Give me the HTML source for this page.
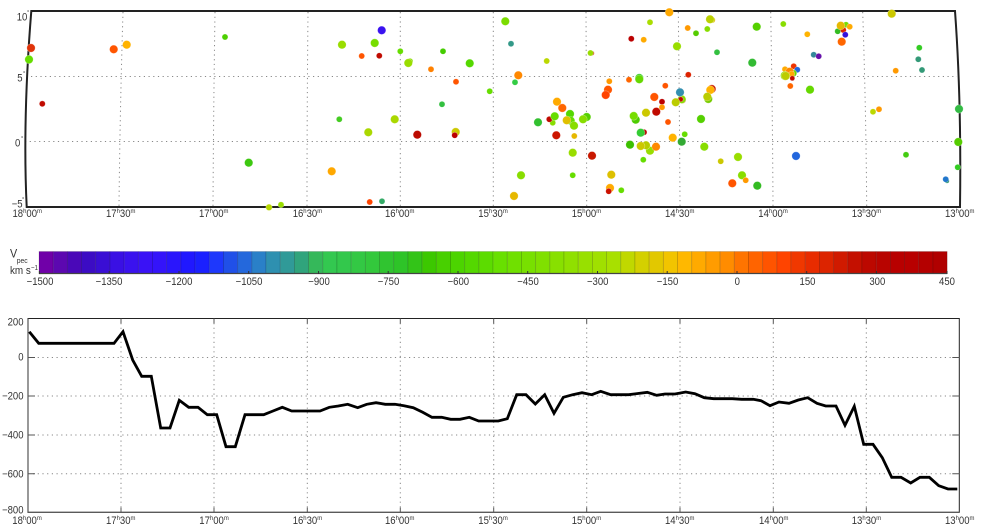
<!DOCTYPE html>
<html><head><meta charset="utf-8"><style>
html,body{margin:0;padding:0;background:#fff;width:981px;height:528px;overflow:hidden}
svg{display:block}
text{font-family:"Liberation Sans",sans-serif;font-size:10.6px;fill:#333;transform:scaleX(.9);transform-box:fill-box;transform-origin:0 50%}
.m text{transform-origin:50% 50%}
.e text{transform-origin:100% 50%}
.s{font-size:6.6px}
.g{stroke:#888;stroke-width:1;stroke-dasharray:1.2 3.5;fill:none}
.t{stroke:#555;stroke-width:1;fill:none}
.d circle{stroke:#fff;stroke-opacity:.4;stroke-width:.6}
.d circle[r="2.700"]{r:3px}
.d circle[r="3.800"]{r:4.2px}
</style></head><body>
<svg width="981" height="528" viewBox="0 0 981 528" xmlns="http://www.w3.org/2000/svg">
<!-- map grid -->
<g class="g">
<path d="M31 76.500H957M25 141.500H960"/>
<path d="M123 12Q120 110 119 206M215 12Q213.500 110 213 206M308 12Q307 110 307 206M400.300 12V206M493.300 12V206M586 12Q586.500 110 586.700 206M678.300 12Q679.500 110 680 206M770.700 12Q772.500 110 773 206M862.700 12Q866 110 866.700 206"/>
</g>
<path d="M31.300 11L955 11Q961.500 100 960 207L26.700 207Q22.500 120 31.300 11Z" fill="none" stroke="#222" stroke-width="2"/>
<!-- map points -->
<g class="d">
<circle cx="31" cy="48" r="3.800" fill="#e0340a"/><circle cx="29" cy="59.500" r="3.800" fill="#66dd00"/><circle cx="42.300" cy="103.800" r="2.700" fill="#c00a00"/><circle cx="113.700" cy="49.300" r="3.800" fill="#ff5500"/><circle cx="126.700" cy="44.700" r="3.800" fill="#ffb300"/><circle cx="225" cy="37" r="2.700" fill="#4dd000"/><circle cx="248.700" cy="162.700" r="3.800" fill="#3dc810"/><circle cx="331.700" cy="171.300" r="3.800" fill="#ffa800"/><circle cx="269" cy="207.300" r="3.200" fill="#b8d800"/><circle cx="281" cy="204.700" r="2.700" fill="#99dd00"/>
<circle cx="505.300" cy="21.300" r="3.800" fill="#7bdc00"/><circle cx="381.700" cy="30.300" r="3.800" fill="#3a12f0"/><circle cx="342" cy="44.700" r="3.800" fill="#99dd00"/><circle cx="374.700" cy="43" r="3.800" fill="#77dd00"/><circle cx="361.700" cy="56" r="2.700" fill="#ff5500"/><circle cx="379.300" cy="55.700" r="2.700" fill="#c00a00"/><circle cx="400.300" cy="51.300" r="2.700" fill="#66dd00"/><circle cx="443" cy="51.300" r="2.700" fill="#44cc00"/><circle cx="410" cy="61.300" r="3" fill="#88dd00"/><circle cx="408.300" cy="63" r="3.800" fill="#99dd00"/><circle cx="469.700" cy="63.300" r="3.800" fill="#55d800"/><circle cx="431" cy="69.300" r="2.700" fill="#ff8000"/><circle cx="456" cy="81.700" r="2.700" fill="#ff5500"/><circle cx="511" cy="43.700" r="2.700" fill="#339988"/><circle cx="546.700" cy="61" r="2.700" fill="#bbd800"/><circle cx="592" cy="53.300" r="2.300" fill="#dd2200"/><circle cx="590.500" cy="53" r="2.700" fill="#99dd00"/><circle cx="631.300" cy="38.700" r="2.700" fill="#bb0000"/><circle cx="643.700" cy="39.700" r="2.700" fill="#ffaa00"/><circle cx="650" cy="22.300" r="2.700" fill="#aadd00"/><circle cx="518.300" cy="75.300" r="3.800" fill="#ff8800"/><circle cx="515" cy="82.300" r="2.700" fill="#33cc44"/><circle cx="489.700" cy="91.300" r="2.700" fill="#66dd00"/><circle cx="442" cy="104.300" r="2.700" fill="#33c040"/><circle cx="339.300" cy="119.300" r="2.700" fill="#44cc22"/><circle cx="394.700" cy="119.300" r="3.800" fill="#aad800"/><circle cx="368.300" cy="132.300" r="3.800" fill="#aad800"/><circle cx="417.300" cy="134.700" r="3.800" fill="#bb0a00"/><circle cx="455.700" cy="132" r="3.800" fill="#ccc800"/><circle cx="454.700" cy="135.300" r="2.700" fill="#bb0000"/><circle cx="369.700" cy="202" r="2.700" fill="#ff4400"/><circle cx="382" cy="201.300" r="2.700" fill="#33aa66"/><circle cx="521" cy="175.300" r="3.800" fill="#88dd00"/><circle cx="514" cy="196" r="3.800" fill="#e6b800"/><circle cx="572.700" cy="175.300" r="2.700" fill="#66dd00"/><circle cx="572.700" cy="152.700" r="3.800" fill="#99dd00"/><circle cx="592" cy="155.700" r="3.800" fill="#c81800"/><circle cx="611.300" cy="174.700" r="3.800" fill="#ddc000"/><circle cx="610" cy="188" r="3.800" fill="#ffaa00"/><circle cx="608.700" cy="191.300" r="2.700" fill="#cc1100"/><circle cx="621.300" cy="190.300" r="2.700" fill="#66dd00"/><circle cx="574.300" cy="136" r="2.700" fill="#e6b800"/><circle cx="556.300" cy="135.300" r="3.800" fill="#cc1500"/><circle cx="538" cy="122.300" r="3.800" fill="#33c030"/><circle cx="552.700" cy="122.700" r="2.700" fill="#88dd00"/><circle cx="549.300" cy="119.300" r="2.700" fill="#c00a00"/><circle cx="554.700" cy="116.300" r="3.800" fill="#66dd00"/><circle cx="557" cy="101.700" r="3.800" fill="#ffaa00"/><circle cx="562.300" cy="108" r="3.800" fill="#ff6600"/><circle cx="570" cy="114" r="3.800" fill="#55d800"/><circle cx="570.700" cy="120.700" r="3.800" fill="#66dd00"/><circle cx="566.700" cy="120.300" r="3.800" fill="#e0c000"/><circle cx="574" cy="125.700" r="3.800" fill="#88dd00"/><circle cx="586.700" cy="117" r="3.800" fill="#55d000"/><circle cx="583" cy="119.300" r="3.800" fill="#88dd00"/><circle cx="609.300" cy="81.300" r="2.700" fill="#ff9900"/><circle cx="629" cy="79.700" r="2.700" fill="#ff6600"/><circle cx="639.300" cy="78" r="3.800" fill="#33cc22"/><circle cx="639.300" cy="79.300" r="3.800" fill="#66d800"/><circle cx="608" cy="89.700" r="3.800" fill="#ff5500"/><circle cx="605.700" cy="95" r="3.800" fill="#ff4400"/><circle cx="654.300" cy="97" r="3.800" fill="#ff5500"/><circle cx="656.300" cy="111.700" r="3.800" fill="#c00a00"/><circle cx="646" cy="112.700" r="3.800" fill="#ccc800"/><circle cx="635.700" cy="119.700" r="3.800" fill="#4dcc00"/><circle cx="633.700" cy="116" r="3.800" fill="#77dd00"/><circle cx="644" cy="132.300" r="2.700" fill="#bb0000"/><circle cx="640.700" cy="132.700" r="3.800" fill="#33cc33"/><circle cx="630" cy="144.700" r="3.800" fill="#3cc000"/><circle cx="650" cy="150.700" r="3.800" fill="#99dd00"/><circle cx="646" cy="145.300" r="3.800" fill="#b8cc00"/><circle cx="640.700" cy="146" r="3.800" fill="#ccc800"/><circle cx="656" cy="146.700" r="3.800" fill="#ff8800"/><circle cx="643.300" cy="159.700" r="2.700" fill="#66dd00"/>
<circle cx="669.300" cy="12.300" r="3.800" fill="#ffa800"/><circle cx="712.300" cy="20" r="2.700" fill="#ddc000"/><circle cx="710" cy="19.300" r="3.800" fill="#bbd000"/><circle cx="687.700" cy="28" r="2.700" fill="#ff9900"/><circle cx="707.300" cy="29" r="2.700" fill="#88dd00"/><circle cx="696" cy="33.300" r="2.700" fill="#55cc00"/><circle cx="756.700" cy="26.700" r="3.800" fill="#55d000"/><circle cx="677" cy="46.300" r="3.800" fill="#99dd00"/><circle cx="717" cy="52.300" r="2.700" fill="#33c040"/><circle cx="752.300" cy="62.700" r="3.800" fill="#33bb33"/><circle cx="783.300" cy="24" r="2.700" fill="#88dd00"/><circle cx="807.300" cy="34.300" r="2.700" fill="#ffb300"/><circle cx="846" cy="24.700" r="2.700" fill="#77dd00"/><circle cx="849.700" cy="26.700" r="2.700" fill="#ffaa00"/><circle cx="837.700" cy="31.300" r="2.700" fill="#33bb22"/><circle cx="843.300" cy="30" r="2.700" fill="#dd2200"/><circle cx="840.700" cy="25.700" r="3.800" fill="#e6b800"/><circle cx="845.300" cy="34.700" r="2.700" fill="#3311dd"/><circle cx="841.700" cy="41.700" r="3.800" fill="#ff6600"/><circle cx="891.700" cy="13.700" r="3.800" fill="#ccc800"/><circle cx="813.700" cy="54.700" r="2.700" fill="#338899"/><circle cx="818.700" cy="56.300" r="2.700" fill="#6611aa"/><circle cx="919.300" cy="47.700" r="2.700" fill="#33cc22"/><circle cx="918.300" cy="59.300" r="2.700" fill="#339977"/><circle cx="922" cy="70" r="2.700" fill="#339977"/><circle cx="895.700" cy="70.700" r="2.700" fill="#ff9900"/><circle cx="793.700" cy="66.300" r="2.700" fill="#ee3300"/><circle cx="797.300" cy="69.700" r="2.700" fill="#2266dd"/><circle cx="785" cy="69.300" r="2.700" fill="#ffaa00"/><circle cx="793.300" cy="73.300" r="3.500" fill="#66d800"/><circle cx="789.700" cy="71.700" r="3.800" fill="#ff8800"/><circle cx="791.700" cy="74" r="3" fill="#ffaa00"/><circle cx="792.300" cy="78.300" r="2.500" fill="#c00a00"/><circle cx="785" cy="75.700" r="4.500" fill="#88dd00"/><circle cx="785.700" cy="76" r="3.800" fill="#bbcc00"/><circle cx="790.300" cy="86" r="2.700" fill="#ff6600"/><circle cx="810" cy="89.700" r="3.800" fill="#66d800"/><circle cx="665.300" cy="85.700" r="2.700" fill="#ff5500"/><circle cx="688.300" cy="74.700" r="2.700" fill="#dd2200"/><circle cx="711.700" cy="89" r="3.800" fill="#cc2200"/><circle cx="710.300" cy="90" r="3.800" fill="#ffb300"/><circle cx="708.300" cy="99" r="3.800" fill="#77cc00"/><circle cx="707.300" cy="96.700" r="3.800" fill="#bbcc00"/><circle cx="662" cy="101.700" r="2.700" fill="#bb0000"/><circle cx="682.500" cy="100" r="3.500" fill="#ee5511"/><circle cx="681.700" cy="99.300" r="3.800" fill="#88dd00"/><circle cx="680.700" cy="99.300" r="2.500" fill="#c00a00"/><circle cx="680" cy="92.300" r="3.800" fill="#338fb0"/><circle cx="675.700" cy="102.300" r="3.800" fill="#bbcc00"/><circle cx="662" cy="107.300" r="2.700" fill="#ff9900"/><circle cx="701" cy="119" r="3.800" fill="#55d000"/><circle cx="668" cy="122" r="2.700" fill="#ff5500"/><circle cx="684.700" cy="134.300" r="2.700" fill="#66dd00"/><circle cx="672.700" cy="137.700" r="3.800" fill="#ffb300"/><circle cx="681.700" cy="141.700" r="3.800" fill="#33aa33"/><circle cx="704.300" cy="146.700" r="3.800" fill="#88dd00"/><circle cx="738" cy="157" r="3.800" fill="#99dd00"/><circle cx="720.700" cy="161.300" r="2.700" fill="#ccc800"/><circle cx="742" cy="175.300" r="3.800" fill="#88dd00"/><circle cx="745.700" cy="180.300" r="2.700" fill="#ff9900"/><circle cx="732.300" cy="183.300" r="3.800" fill="#ff5500"/><circle cx="757.300" cy="185.700" r="3.800" fill="#33bb22"/><circle cx="796" cy="156" r="3.800" fill="#2266dd"/><circle cx="873" cy="111.700" r="2.700" fill="#bbd800"/><circle cx="879" cy="109.300" r="2.700" fill="#ff9900"/><circle cx="906" cy="154.700" r="2.700" fill="#44cc11"/><circle cx="947" cy="181" r="2.300" fill="#339977"/><circle cx="945.700" cy="179.300" r="2.700" fill="#2277cc"/><circle cx="957.700" cy="167.300" r="2.700" fill="#33cc22"/><circle cx="958.300" cy="142" r="3.800" fill="#55cc00"/><circle cx="959" cy="109" r="3.800" fill="#33bb44"/>
</g>
<!-- map y labels -->
<text x="16.700" y="20.500">10</text><text x="17.300" y="81.700">5</text><text x="15" y="146.700">0</text><text x="11.700" y="207.500">−5</text>
<text class="s" x="27" y="14.500">°</text><text class="s" x="23" y="75.500">°</text><text class="s" x="21" y="140.500">°</text><text class="s" x="22" y="201.500">°</text>
<!-- map x labels -->
<g>
<text x="12.500" y="217">18<tspan class="s" dy="-4">h</tspan><tspan dy="4">00</tspan><tspan class="s" dy="-4">m</tspan></text>
<text x="106" y="217">17<tspan class="s" dy="-4">h</tspan><tspan dy="4">30</tspan><tspan class="s" dy="-4">m</tspan></text>
<text x="199" y="217">17<tspan class="s" dy="-4">h</tspan><tspan dy="4">00</tspan><tspan class="s" dy="-4">m</tspan></text>
<text x="292.700" y="217">16<tspan class="s" dy="-4">h</tspan><tspan dy="4">30</tspan><tspan class="s" dy="-4">m</tspan></text>
<text x="385" y="217">16<tspan class="s" dy="-4">h</tspan><tspan dy="4">00</tspan><tspan class="s" dy="-4">m</tspan></text>
<text x="478.300" y="217">15<tspan class="s" dy="-4">h</tspan><tspan dy="4">30</tspan><tspan class="s" dy="-4">m</tspan></text>
<text x="571.700" y="217">15<tspan class="s" dy="-4">h</tspan><tspan dy="4">00</tspan><tspan class="s" dy="-4">m</tspan></text>
<text x="665" y="217">14<tspan class="s" dy="-4">h</tspan><tspan dy="4">30</tspan><tspan class="s" dy="-4">m</tspan></text>
<text x="758.300" y="217">14<tspan class="s" dy="-4">h</tspan><tspan dy="4">00</tspan><tspan class="s" dy="-4">m</tspan></text>
<text x="851.700" y="217">13<tspan class="s" dy="-4">h</tspan><tspan dy="4">30</tspan><tspan class="s" dy="-4">m</tspan></text>
<text x="945" y="217">13<tspan class="s" dy="-4">h</tspan><tspan dy="4">00</tspan><tspan class="s" dy="-4">m</tspan></text>
</g>
<!-- colorbar -->
<g stroke="#000" stroke-opacity=".17" stroke-width=".8">
<rect x="39" y="251.500" width="14.190" height="22" fill="#7000a8"/><rect x="53.190" y="251.500" width="14.190" height="22" fill="#5c08b0"/><rect x="67.380" y="251.500" width="14.190" height="22" fill="#4a08b8"/><rect x="81.570" y="251.500" width="14.190" height="22" fill="#3c0cc4"/><rect x="95.760" y="251.500" width="14.190" height="22" fill="#3a0ed4"/><rect x="109.950" y="251.500" width="14.190" height="22" fill="#3a10e4"/><rect x="124.140" y="251.500" width="14.190" height="22" fill="#3a12ee"/><rect x="138.330" y="251.500" width="14.190" height="22" fill="#3a12f6"/><rect x="152.520" y="251.500" width="14.190" height="22" fill="#3414fa"/><rect x="166.710" y="251.500" width="14.190" height="22" fill="#2a16fc"/><rect x="180.900" y="251.500" width="14.190" height="22" fill="#2018ff"/><rect x="195.090" y="251.500" width="14.190" height="22" fill="#1a20ff"/><rect x="209.280" y="251.500" width="14.190" height="22" fill="#1e38fc"/><rect x="223.470" y="251.500" width="14.190" height="22" fill="#2050e8"/><rect x="237.660" y="251.500" width="14.190" height="22" fill="#2468dc"/><rect x="251.850" y="251.500" width="14.190" height="22" fill="#2a80c8"/><rect x="266.040" y="251.500" width="14.190" height="22" fill="#2e90b0"/><rect x="280.230" y="251.500" width="14.190" height="22" fill="#309a98"/><rect x="294.420" y="251.500" width="14.190" height="22" fill="#30a47c"/><rect x="308.610" y="251.500" width="14.190" height="22" fill="#35b85a"/><rect x="322.800" y="251.500" width="14.190" height="22" fill="#33c850"/><rect x="336.990" y="251.500" width="14.190" height="22" fill="#33c84c"/><rect x="351.180" y="251.500" width="14.190" height="22" fill="#33c844"/><rect x="365.370" y="251.500" width="14.190" height="22" fill="#33c83c"/><rect x="379.560" y="251.500" width="14.190" height="22" fill="#30c430"/><rect x="393.750" y="251.500" width="14.190" height="22" fill="#2ec428"/><rect x="407.940" y="251.500" width="14.190" height="22" fill="#33c418"/><rect x="422.130" y="251.500" width="14.190" height="22" fill="#3cc800"/><rect x="436.320" y="251.500" width="14.190" height="22" fill="#48d000"/><rect x="450.510" y="251.500" width="14.190" height="22" fill="#4cd400"/><rect x="464.700" y="251.500" width="14.190" height="22" fill="#54d800"/><rect x="478.890" y="251.500" width="14.190" height="22" fill="#5cdc00"/><rect x="493.080" y="251.500" width="14.190" height="22" fill="#68e000"/><rect x="507.270" y="251.500" width="14.190" height="22" fill="#70e000"/><rect x="521.460" y="251.500" width="14.190" height="22" fill="#78e000"/><rect x="535.650" y="251.500" width="14.190" height="22" fill="#80e000"/><rect x="549.840" y="251.500" width="14.190" height="22" fill="#88e000"/><rect x="564.030" y="251.500" width="14.190" height="22" fill="#90e000"/><rect x="578.220" y="251.500" width="14.190" height="22" fill="#98e000"/><rect x="592.410" y="251.500" width="14.190" height="22" fill="#a0e000"/><rect x="606.600" y="251.500" width="14.190" height="22" fill="#a8e000"/><rect x="620.790" y="251.500" width="14.190" height="22" fill="#c0d800"/><rect x="634.980" y="251.500" width="14.190" height="22" fill="#d4d000"/><rect x="649.170" y="251.500" width="14.190" height="22" fill="#e2c800"/><rect x="663.360" y="251.500" width="14.190" height="22" fill="#f2c400"/><rect x="677.550" y="251.500" width="14.190" height="22" fill="#ffb800"/><rect x="691.740" y="251.500" width="14.190" height="22" fill="#ffaa00"/><rect x="705.930" y="251.500" width="14.190" height="22" fill="#ff9c00"/><rect x="720.120" y="251.500" width="14.190" height="22" fill="#ff8c00"/><rect x="734.310" y="251.500" width="14.190" height="22" fill="#ff7400"/><rect x="748.500" y="251.500" width="14.190" height="22" fill="#ff6400"/><rect x="762.690" y="251.500" width="14.190" height="22" fill="#ff5400"/><rect x="776.880" y="251.500" width="14.190" height="22" fill="#ff4400"/><rect x="791.070" y="251.500" width="14.190" height="22" fill="#f03800"/><rect x="805.260" y="251.500" width="14.190" height="22" fill="#e82c00"/><rect x="819.450" y="251.500" width="14.190" height="22" fill="#dc2400"/><rect x="833.640" y="251.500" width="14.190" height="22" fill="#d01a00"/><rect x="847.830" y="251.500" width="14.190" height="22" fill="#c41000"/><rect x="862.020" y="251.500" width="14.190" height="22" fill="#bc0800"/><rect x="876.210" y="251.500" width="14.190" height="22" fill="#b80400"/><rect x="890.400" y="251.500" width="14.190" height="22" fill="#b80000"/><rect x="904.590" y="251.500" width="14.190" height="22" fill="#b80000"/><rect x="918.780" y="251.500" width="14.190" height="22" fill="#b40000"/><rect x="932.970" y="251.500" width="14.190" height="22" fill="#b00000"/>
</g>
<path d="M39 273.500H947.200" stroke="#444" stroke-width="1.200" fill="none"/>
<path d="M39.400 271V274M109.200 271V274M179 271V274M248.700 271V274M318.500 271V274M388.200 271V274M458 271V274M527.700 271V274M597.500 271V274M667.200 271V274M737 271V274M806.700 271V274M876.500 271V274M947 271V274" stroke="#333" stroke-width="1" fill="none"/>
<text x="10" y="257.500" style="font-size:12px">V</text><text x="16.700" y="263" style="font-size:7.6px">pec</text>
<text x="10" y="274" style="font-size:11px">km s<tspan dy="-4" style="font-size:7px">−1</tspan></text>
<g class="m" text-anchor="middle"><text x="40" y="285">−1500</text><text x="109" y="285">−1350</text><text x="179" y="285">−1200</text><text x="249" y="285">−1050</text><text x="319" y="285">−900</text><text x="388.500" y="285">−750</text><text x="458.300" y="285">−600</text><text x="528" y="285">−450</text><text x="597.700" y="285">−300</text><text x="667.500" y="285">−150</text><text x="737.300" y="285">0</text><text x="807.500" y="285">150</text><text x="877.300" y="285">300</text><text x="947" y="285">450</text></g>
<!-- line plot -->
<g class="g">
<path d="M33 357.500H954M33 396H954M33 435H954M33 473.700H954"/>
<path d="M121 323V507M214 323V507M307.300 323V507M400.300 323V507M493.700 323V507M586.700 323V507M680 323V507M773.300 323V507M866.300 323V507"/>
</g>
<rect x="28" y="318.500" width="931.300" height="193.800" fill="none" stroke="#222" stroke-width="1"/>
<path d="M121 318.500v5M121 512.300v-5M214 318.500v5M214 512.300v-5M307.300 318.500v5M307.300 512.300v-5M400.300 318.500v5M400.300 512.300v-5M493.700 318.500v5M493.700 512.300v-5M586.700 318.500v5M586.700 512.300v-5M680 318.500v5M680 512.300v-5M773.300 318.500v5M773.300 512.300v-5M866.300 318.500v5M866.300 512.300v-5M28 357.500h7M959.300 357.500h-7M28 396h7M959.300 396h-7M28 435h7M959.300 435h-7M28 473.700h7M959.300 473.700h-7" class="t"/>
<path d="M28 318.500V512.300H959.300" fill="none" stroke="#555" stroke-width="1.200"/>
<polyline fill="none" stroke="#000" stroke-width="2.800" stroke-linejoin="miter" points="29.300,331.700 38.700,343.300 114,343.300 123,331.700 132.700,360 141.700,376.300 151.300,376.300 160.700,428 170,428 179.300,400.300 188.700,407.300 198,407.300 207.300,414.700 216.700,414.700 226,446.700 235.300,446.700 245,414.700 263.700,414.700 273,411 282.300,407.300 291.700,411 320,411 329.300,407.300 338.300,406 347.700,404.300 357.700,407.700 366.700,404.300 376,402.700 385.300,404.300 395,404.300 404,405.700 413.300,407.700 422.700,412.300 432,417.300 441.700,417.300 450.700,419.300 460,419.300 469.300,417.300 478.700,421 498.300,421 507.300,418.700 516.700,394.700 526,394.700 535.300,404 544.700,394.700 554,413.300 563.300,397.300 572.700,394.700 582,392.700 591.700,394.700 600.700,391.300 610.700,394.700 628.700,394.700 647.300,392.300 656.700,395.300 665,394 675,394 685.700,392 695,393.700 704.300,397.700 713.700,398.700 732.300,398.700 741.700,399.300 753.300,399.300 761,400.700 770,405.700 779,402 789,403.300 798.300,400 807.700,397.700 817,403.300 825.700,406 836,406 845,425.300 854.300,406.300 863.700,444.300 873,444.300 882.300,457.700 891.700,477.300 901,477.300 910.700,483 920,477.300 929.300,477.300 938.700,485.700 948,489 957.300,489"/>
<g class="e" text-anchor="end"><text x="23.500" y="325.500">200</text><text x="23.500" y="360.500">0</text><text x="23.500" y="399.500">−200</text><text x="23.500" y="438.500">−400</text><text x="23.500" y="477.300">−600</text><text x="23.500" y="513.500">−800</text></g>
<g>
<text x="12.300" y="524">18<tspan class="s" dy="-4">h</tspan><tspan dy="4">00</tspan><tspan class="s" dy="-4">m</tspan></text>
<text x="106" y="524">17<tspan class="s" dy="-4">h</tspan><tspan dy="4">30</tspan><tspan class="s" dy="-4">m</tspan></text>
<text x="199.300" y="524">17<tspan class="s" dy="-4">h</tspan><tspan dy="4">00</tspan><tspan class="s" dy="-4">m</tspan></text>
<text x="292.700" y="524">16<tspan class="s" dy="-4">h</tspan><tspan dy="4">30</tspan><tspan class="s" dy="-4">m</tspan></text>
<text x="385" y="524">16<tspan class="s" dy="-4">h</tspan><tspan dy="4">00</tspan><tspan class="s" dy="-4">m</tspan></text>
<text x="478.300" y="524">15<tspan class="s" dy="-4">h</tspan><tspan dy="4">30</tspan><tspan class="s" dy="-4">m</tspan></text>
<text x="571.700" y="524">15<tspan class="s" dy="-4">h</tspan><tspan dy="4">00</tspan><tspan class="s" dy="-4">m</tspan></text>
<text x="665" y="524">14<tspan class="s" dy="-4">h</tspan><tspan dy="4">30</tspan><tspan class="s" dy="-4">m</tspan></text>
<text x="759" y="524">14<tspan class="s" dy="-4">h</tspan><tspan dy="4">00</tspan><tspan class="s" dy="-4">m</tspan></text>
<text x="851.700" y="524">13<tspan class="s" dy="-4">h</tspan><tspan dy="4">30</tspan><tspan class="s" dy="-4">m</tspan></text>
<text x="945" y="524">13<tspan class="s" dy="-4">h</tspan><tspan dy="4">00</tspan><tspan class="s" dy="-4">m</tspan></text>
</g>
</svg>
</body></html>
